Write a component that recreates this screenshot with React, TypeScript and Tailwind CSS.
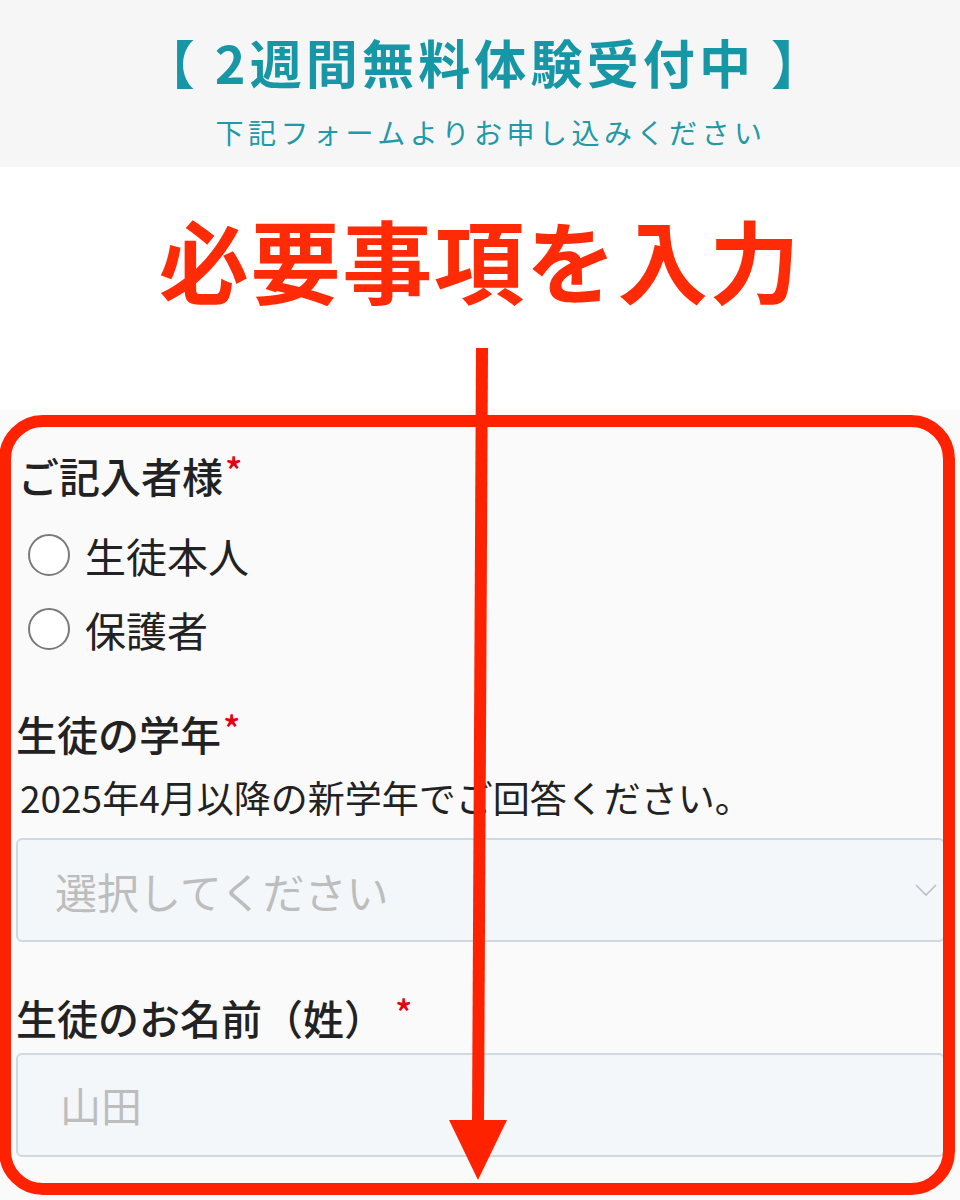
const jp = { fontFamily: '"Noto Sans CJK JP", "Noto Sans", sans-serif' };

function Required() {
  return <span className="relative top-[-8px] text-[#e60012] text-[36px] leading-none ml-[2px]">*</span>;
}

function Radio({ label }: { label: string }) {
  return (
    <label className="flex items-center h-[74px] pl-[12px] gap-[15px]">
      <span className="w-[42px] h-[42px] rounded-full border-2 border-[#7a7a7a] bg-white shrink-0" />
      <span className="text-[41px] leading-none text-[#222]">{label}</span>
    </label>
  );
}

export default function App() {
  return (
    <div className="relative w-[960px] h-[1200px] overflow-hidden bg-white" style={jp}>
      {/* Header */}
      <div className="h-[167px] bg-[#f6f6f6] flex flex-col items-center">
        <h1 className="mt-[26px] pl-[10px] text-[52px] leading-[72px] font-bold text-[#1796a5] tracking-[0.08em] whitespace-pre">
          【 2週間無料体験受付中 】
        </h1>
        <p className="mt-[14px] pl-[22px] text-[28px] leading-[40px] text-[#2299a8] tracking-[0.16em]">
          下記フォームよりお申し込みください
        </p>
      </div>

      {/* Annotation heading */}
      <div className="h-[243px] flex justify-center">
        <h2 className="mt-[36px] text-[90px] leading-[110px] font-bold text-[#ff2a06] tracking-[0.02em]">
          必要事項を入力
        </h2>
      </div>

      {/* Form */}
      <div className="bg-[#fafafa] h-[790px] pl-[16px] pr-[15px] pt-[35px] text-[#222]">
        <div className="text-[41px] leading-[60px] font-medium pl-[2px]">
          ご記入者様<Required />
        </div>
        <div className="mt-[13px]">
          <Radio label="生徒本人" />
          <Radio label="保護者" />
        </div>

        <div className="mt-[37px] text-[41px] leading-[60px] font-medium">
          生徒の学年<Required />
        </div>
        <p className="mt-[9px] text-[37px] leading-[50px] pl-[4px]">
          2025年4月以降の新学年でご回答ください。
        </p>
        <div className="mt-[16px] h-[104px] rounded-[6px] border-2 border-[#cfd9e0] bg-[#f4f7f9] flex items-center justify-between pl-[37px] pr-[6px]">
          <span className="text-[42px] text-[#bdbdbd]">選択してください</span>
          <svg width="22" height="12" viewBox="0 0 22 12" fill="none" stroke="#b8c0c4" strokeWidth="1.6">
            <path d="M1 1l10 10L21 1" />
          </svg>
        </div>

        <div className="mt-[45px] text-[41px] leading-[60px] font-medium">
          生徒のお名前（姓）<span className="ml-[8px]"><Required /></span>
        </div>
        <div className="mt-[6px] h-[104px] rounded-[6px] border-2 border-[#cfd9e0] bg-[#f4f7f9] flex items-center pl-[42px]">
          <span className="text-[41px] text-[#bdbdbd]">山田</span>
        </div>
      </div>

      {/* Red frame overlay */}
      <div className="absolute left-[-1px] top-[415px] w-[956px] h-[780px] border-[12px] border-[#ff2200] rounded-[44px] pointer-events-none" />

      {/* Arrow overlay */}
      <svg className="absolute left-0 top-0 pointer-events-none" width="960" height="1200">
        <line x1="482" y1="348" x2="478" y2="1124" stroke="#ff2200" strokeWidth="12" />
        <polygon points="449,1120 507,1120 478,1180" fill="#ff2200" />
      </svg>
    </div>
  );
}
